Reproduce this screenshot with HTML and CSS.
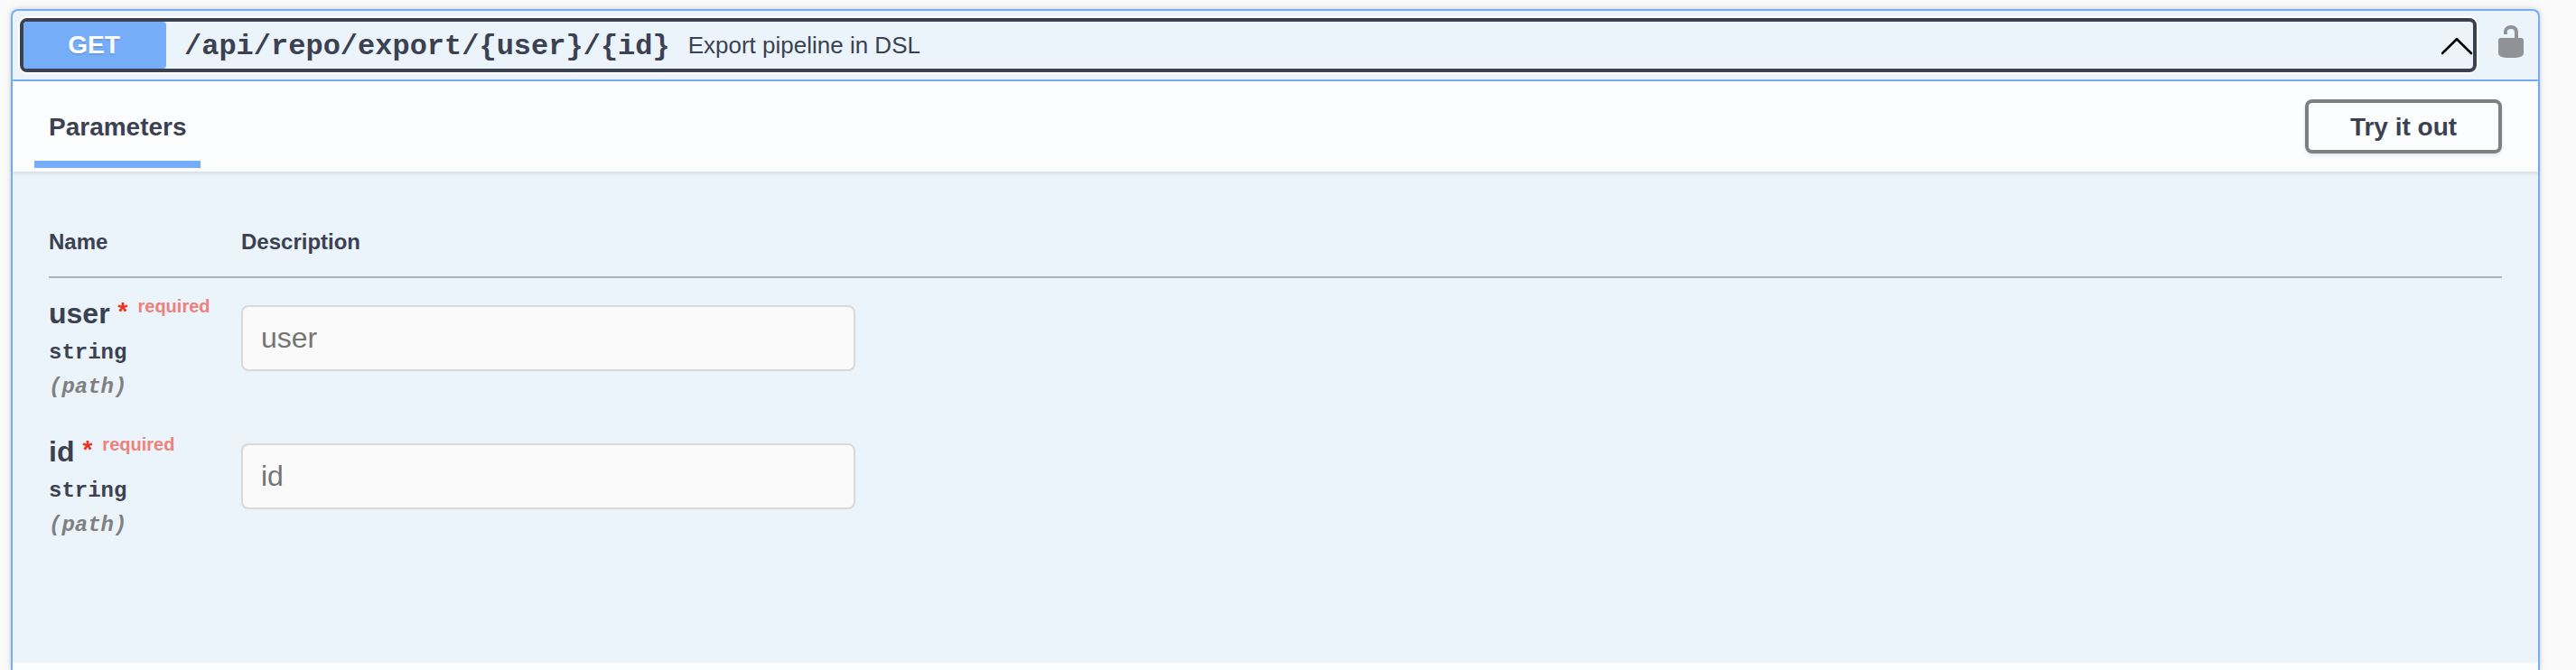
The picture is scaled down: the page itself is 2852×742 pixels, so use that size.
FILE: index.html
```html
<!DOCTYPE html>
<html lang="en">
<head>
<meta charset="utf-8">
<title>API documentation</title>
<link rel="stylesheet" href="styles.css">
</head>
<body>
<section class="opblock">
  <div class="summary">
    <button class="summary-control">
      <span class="method">GET</span>
      <span class="path">/api/repo/export/{user}/{id}</span>
      <span class="summary-text">Export pipeline in DSL</span>
      <svg class="arrow" viewBox="0 0 36 20"><path d="M2 18 18 2.200 34 18" fill="none" stroke="#000" stroke-width="2.600" stroke-linecap="round" stroke-linejoin="round"/></svg>
    </button>
    <svg class="lock" viewBox="0 0 28 36"><path d="M3 14H18V8.500C18 5.500 17 4 14 4C11.200 4 9.800 5.500 9.800 8V10H6V8C6 3 9.300 0 14 0C19 0 22 3.200 22 8V14H25C26.800 14 28 15 28 16.500V31C28 33 26 34.500 24 35C22 35.700 20 36 17 36H11C8 36 6 35.700 4 35C2 34.500 0 33 0 31V16.500C0 15 1.200 14 3 14Z" fill="#8f9297"/></svg>
  </div>
  <div class="section-header">
    <h4 class="tab">Parameters</h4>
    <button class="try-out">Try it out</button>
  </div>
  <div class="parameters">
    <div class="row head"><div>Name</div><div>Description</div></div>
    <div class="row param">
      <div class="param-info">
        <div class="param-name">user<span class="star">*</span><span class="required">required</span></div>
        <div class="type">string</div>
        <div class="in">(path)</div>
      </div>
      <input class="field" type="text" placeholder="user">
    </div>
    <div class="row param">
      <div class="param-info">
        <div class="param-name">id<span class="star">*</span><span class="required">required</span></div>
        <div class="type">string</div>
        <div class="in">(path)</div>
      </div>
      <input class="field" type="text" placeholder="id">
    </div>
  </div>
  <div class="responses"></div>
</section>
</body>
</html>
```

FILE: styles.css
```css
* { box-sizing: border-box; }
body {
  margin: 0;
  height: 742px;
  padding: 10px 40px 0 12px;
  background: #fafafa;
  color: #3b4151;
  font-family: "Liberation Sans", Arial, sans-serif;
}
button { font-family: inherit; color: inherit; }
.opblock {
  height: 732px;
  border: 2px solid #75adf9;
  border-bottom: 0;
  border-radius: 8px 8px 0 0;
  background: #ebf3fb;
  box-shadow: 0 0 6px rgba(0, 0, 0, .19);
}
.summary {
  display: flex;
  height: 78px;
  padding: 8px 16px 8px 8px;
  justify-content: space-between;
  border-bottom: 2px solid #75adf9;
}
.summary-control {
  display: flex;
  align-items: center;
  width: 2720px;
  height: 60px;
  padding: 0;
  border: 4px solid #3b4151;
  border-radius: 8px;
  background: transparent;
  box-shadow: 0 0 0 2px #fff;
}
.method {
  width: 158px;
  height: 52px;
  padding-right: 2px;
  border-radius: 4px;
  background: #75adf9;
  color: #fff;
  font-size: 28px;
  font-weight: 700;
  line-height: 52px;
  text-align: center;
  text-shadow: 0 2px 0 rgba(0, 0, 0, .1);
}
.path {
  padding: 3px 0 0 20px;
  font: 700 32px/40px "Liberation Mono", "Courier New", monospace;
}
.summary-text {
  padding-left: 20px;
  font-size: 26px;
  line-height: 40px;
}
.arrow { width: 36px; height: 20px; margin: 2px 0 0 auto; }
.lock { width: 28px; height: 36px; margin-top: 8px; }
.section-header {
  display: flex;
  align-items: center;
  justify-content: space-between;
  height: 100px;
  padding: 0 40px 0 24px;
  background: #fcfdff;
  box-shadow: 0 2px 4px rgba(0, 0, 0, .1);
}
.tab {
  align-self: flex-end;
  width: 184px;
  height: 82px;
  margin: 0 0 4px;
  padding: 5px 0 0 16px;
  border-bottom: 8px solid #75adf9;
  font-size: 28px;
  line-height: 64px;
}
.try-out {
  width: 218px;
  height: 60px;
  padding: 1px 0 0;
  border: 4px solid #808080;
  border-radius: 8px;
  background: transparent;
  box-shadow: 0 2px 4px rgba(0, 0, 0, .1);
  font-size: 28px;
  font-weight: 700;
}
.parameters { height: 544px; padding: 40px 40px 0; }
.row { display: grid; grid-template-columns: 213px 1fr; }
.head {
  height: 78px;
  padding-top: 24px;
  border-bottom: 2px solid #a9b2bf;
  font-size: 24px;
  font-weight: 700;
  line-height: 28px;
}
.param { height: 153px; padding-top: 20px; }
.param-name {
  display: flex;
  height: 45px;
  font-size: 32px;
  font-weight: 700;
  line-height: 39px;
}
.star {
  margin-left: 9px;
  color: #ea3323;
  font-size: 28px;
  line-height: 33px;
}
.required {
  margin-left: 11px;
  color: #ec827c;
  font-size: 20px;
  line-height: 23px;
}
.type, .in {
  height: 38px;
  font: 700 24px/36px "Liberation Mono", "Courier New", monospace;
}
.in { color: #808080; font-style: italic; }
.field {
  width: 680px;
  height: 73px;
  margin-top: 10px;
  padding: 0 20px;
  border: 2px solid #d9d9d9;
  border-radius: 8px;
  background: #fafafa;
  font: 32px "Liberation Sans", Arial, sans-serif;
}
.field::placeholder { color: #757575; }
.responses { height: 8px; background: #fcfdff; }
```
